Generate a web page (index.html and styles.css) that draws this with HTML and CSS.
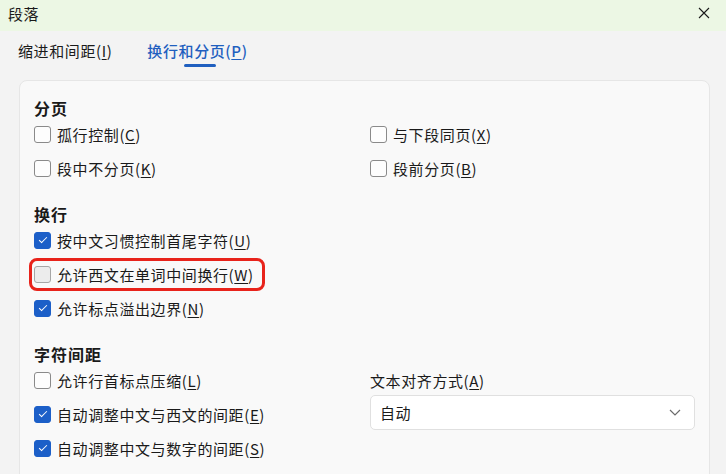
FILE: index.html
```html
<!DOCTYPE html>
<html lang="zh-CN">
<head>
    <meta charset="UTF-8">
    <title>段落</title>
    <link rel="stylesheet" href="styles.css">
</head>
<body>
    <div class="titlebar">
        <span class="title">段落</span>
        <svg class="close" width="12" height="12" viewBox="0 0 12 12">
            <path d="M1 1 L11 11 M11 1 L1 11" stroke="#1a1a1a" stroke-width="1.1" fill="none"/>
        </svg>
    </div>

    <div class="tabs">
        <div class="tab">缩进和间距(<u>I</u>)</div>
        <div class="tab active">换行和分页(<u>P</u>)</div>
    </div>

    <div class="panel">
        <div class="heading">分页</div>
        <div class="grid">
            <label class="row"><span class="box"></span><span>孤行控制(<u>C</u>)</span></label>
            <label class="row"><span class="box"></span><span>与下段同页(<u>X</u>)</span></label>
            <label class="row"><span class="box"></span><span>段中不分页(<u>K</u>)</span></label>
            <label class="row"><span class="box"></span><span>段前分页(<u>B</u>)</span></label>
        </div>

        <div class="heading section">换行</div>
        <label class="row"><span class="box checked"></span><span>按中文习惯控制首尾字符(<u>U</u>)</span></label>
        <div class="row">
            <label class="highlight"><span class="box dim"></span><span>允许西文在单词中间换行(<u>W</u>)</span></label>
        </div>
        <label class="row"><span class="box checked"></span><span>允许标点溢出边界(<u>N</u>)</span></label>

        <div class="heading section">字符间距</div>
        <div class="grid">
            <div class="col">
                <label class="row"><span class="box"></span><span>允许行首标点压缩(<u>L</u>)</span></label>
                <label class="row"><span class="box checked"></span><span>自动调整中文与西文的间距(<u>E</u>)</span></label>
                <label class="row"><span class="box checked"></span><span>自动调整中文与数字的间距(<u>S</u>)</span></label>
            </div>
            <div class="col">
                <div class="field-label">文本对齐方式(<u>A</u>)</div>
                <div class="select">
                    <span>自动</span>
                    <svg width="12" height="7" viewBox="0 0 12 7">
                        <path d="M1 1 L6 6 L11 1" stroke="#6b6b6b" stroke-width="1.2" fill="none"/>
                    </svg>
                </div>
            </div>
        </div>
    </div>
</body>
</html>
```

FILE: styles.css
```css
body {
    margin: 0;
    font-family: "Noto Sans CJK SC", "Noto Sans", sans-serif;
    font-size: 15px;
    letter-spacing: 0.6px;
    color: #1a1a1a;
    background-color: #f3f3f3;
    overflow: hidden;
    height: 474px;
}
u {
    text-decoration: underline;
    text-underline-offset: 2px;
    text-decoration-thickness: 1px;
}
.titlebar {
    height: 31px;
    background-color: #ecf7e4;
    display: flex;
    align-items: center;
    justify-content: space-between;
    padding: 0 16px 0 8px;
}
.title {
    font-size: 15px;
    line-height: 20px;
    margin-top: -4px;
}
.close {
    margin-top: -6px;
}
.tabs {
    height: 49px;
    display: flex;
    gap: 35px;
    padding-left: 18px;
}
.tab {
    position: relative;
    line-height: 20px;
    padding-top: 10px;
}
.tab.active {
    color: #1f5fbf;
    font-weight: 500;
}
.tab.active::after {
    content: "";
    position: absolute;
    left: 37px;
    top: 33px;
    width: 32px;
    height: 3px;
    border-radius: 2px;
    background-color: #1f5fbf;
}
.panel {
    margin: 0 16px 0 19px;
    height: 420px;
    background-color: #f9f9f9;
    border: 1px solid #e6e6e6;
    border-radius: 8px;
    padding: 18px 14px 0 14px;
}
.heading {
    font-weight: bold;
    font-size: 16px;
    letter-spacing: 1px;
    line-height: 18px;
}
.heading.section {
    margin-top: 20px;
}
.grid {
    display: grid;
    grid-template-columns: 336px 1fr;
}
.row {
    height: 34px;
    display: flex;
    align-items: center;
}
.row, .highlight {
    gap: 6px;
}
.box {
    width: 15px;
    height: 15px;
    border: 1px solid #8a8a8a;
    border-radius: 3px;
    background-color: #fdfdfd;
    flex-shrink: 0;
    position: relative;
}
.box.dim {
    background-color: #ececec;
    border-color: #a6a6a6;
}
.box.checked {
    background-color: #1c5fc8;
    border-color: #1c5fc8;
}
.box.checked::after {
    content: "";
    position: absolute;
    left: 4px;
    top: 4px;
    width: 7px;
    height: 3px;
    border-left: 1.6px solid #fff;
    border-bottom: 1.6px solid #fff;
    transform: rotate(-45deg);
}
.highlight {
    display: flex;
    align-items: center;
    height: 23px;
    padding-right: 6px;
    outline: 3px solid #e8231b;
    outline-offset: 2px;
    border-radius: 3px;
}
.field-label {
    line-height: 20px;
    margin-top: 8px;
    margin-bottom: 4px;
}
.select {
    height: 33px;
    background-color: #fff;
    border: 1px solid #e0e0e0;
    border-radius: 5px;
    display: flex;
    align-items: center;
    justify-content: space-between;
    padding: 0 13px 0 9px;
}
```
